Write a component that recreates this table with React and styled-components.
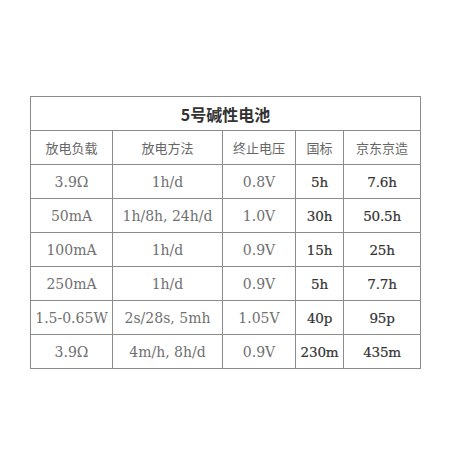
import React from "react";
import styled, { createGlobalStyle } from "styled-components";

const GlobalStyle = createGlobalStyle`
  html, body {
    margin: 0;
    padding: 0;
    background: #fff;
  }
`;

const Page = styled.div`
  width: 450px;
  height: 450px;
  padding: 96px 0 0 30px;
  box-sizing: border-box;
`;

const Table = styled.table`
  border-collapse: collapse;
  table-layout: fixed;
  width: 390px;
  font-family: "DejaVu Serif", "Noto Sans CJK SC", serif;
  color: #666;
`;

const TitleCell = styled.th`
  height: 33px;
  border: 1px solid #8c8c8c;
  font-family: "Noto Sans CJK SC", sans-serif;
  font-size: 16px;
  font-weight: 700;
  color: #333;
  text-align: center;
  padding: 0;
`;

const HeadCell = styled.th`
  height: 33px;
  border: 1px solid #8c8c8c;
  font-family: "Noto Sans CJK SC", sans-serif;
  font-size: 13px;
  font-weight: 400;
  color: #666;
  text-align: center;
  padding: 0;
`;

const Cell = styled.td`
  height: 33px;
  border: 1px solid #8c8c8c;
  font-size: ${(p) => (p.$bold ? "13.5px" : "14px")};
  font-weight: 400;
  color: ${(p) => (p.$bold ? "#333" : "#707070")};
  -webkit-text-stroke: ${(p) => (p.$bold ? "0.2px #333" : "0")};
  letter-spacing: ${(p) => (p.$bold ? "-0.2px" : "0")};
  text-align: center;
  white-space: nowrap;
  padding: 0;
`;

const widths = [82, 110, 73, 48, 77];
const headers = ["放电负载", "放电方法", "终止电压", "国标", "京东京造"];
const rows = [
  ["3.9Ω", "1h/d", "0.8V", "5h", "7.6h"],
  ["50mA", "1h/8h, 24h/d", "1.0V", "30h", "50.5h"],
  ["100mA", "1h/d", "0.9V", "15h", "25h"],
  ["250mA", "1h/d", "0.9V", "5h", "7.7h"],
  ["1.5-0.65W", "2s/28s, 5mh", "1.05V", "40p", "95p"],
  ["3.9Ω", "4m/h, 8h/d", "0.9V", "230m", "435m"],
];

export default function App() {
  return (
    <Page>
      <GlobalStyle />
      <Table>
        <colgroup>
          {widths.map((w, i) => (
            <col key={i} style={{ width: w }} />
          ))}
        </colgroup>
        <thead>
          <tr>
            <TitleCell colSpan={5}>5号碱性电池</TitleCell>
          </tr>
          <tr>
            {headers.map((h) => (
              <HeadCell key={h}>{h}</HeadCell>
            ))}
          </tr>
        </thead>
        <tbody>
          {rows.map((r, i) => (
            <tr key={i}>
              {r.map((c, j) => (
                <Cell key={j} $bold={j >= 3}>
                  {c}
                </Cell>
              ))}
            </tr>
          ))}
        </tbody>
      </Table>
    </Page>
  );
}
